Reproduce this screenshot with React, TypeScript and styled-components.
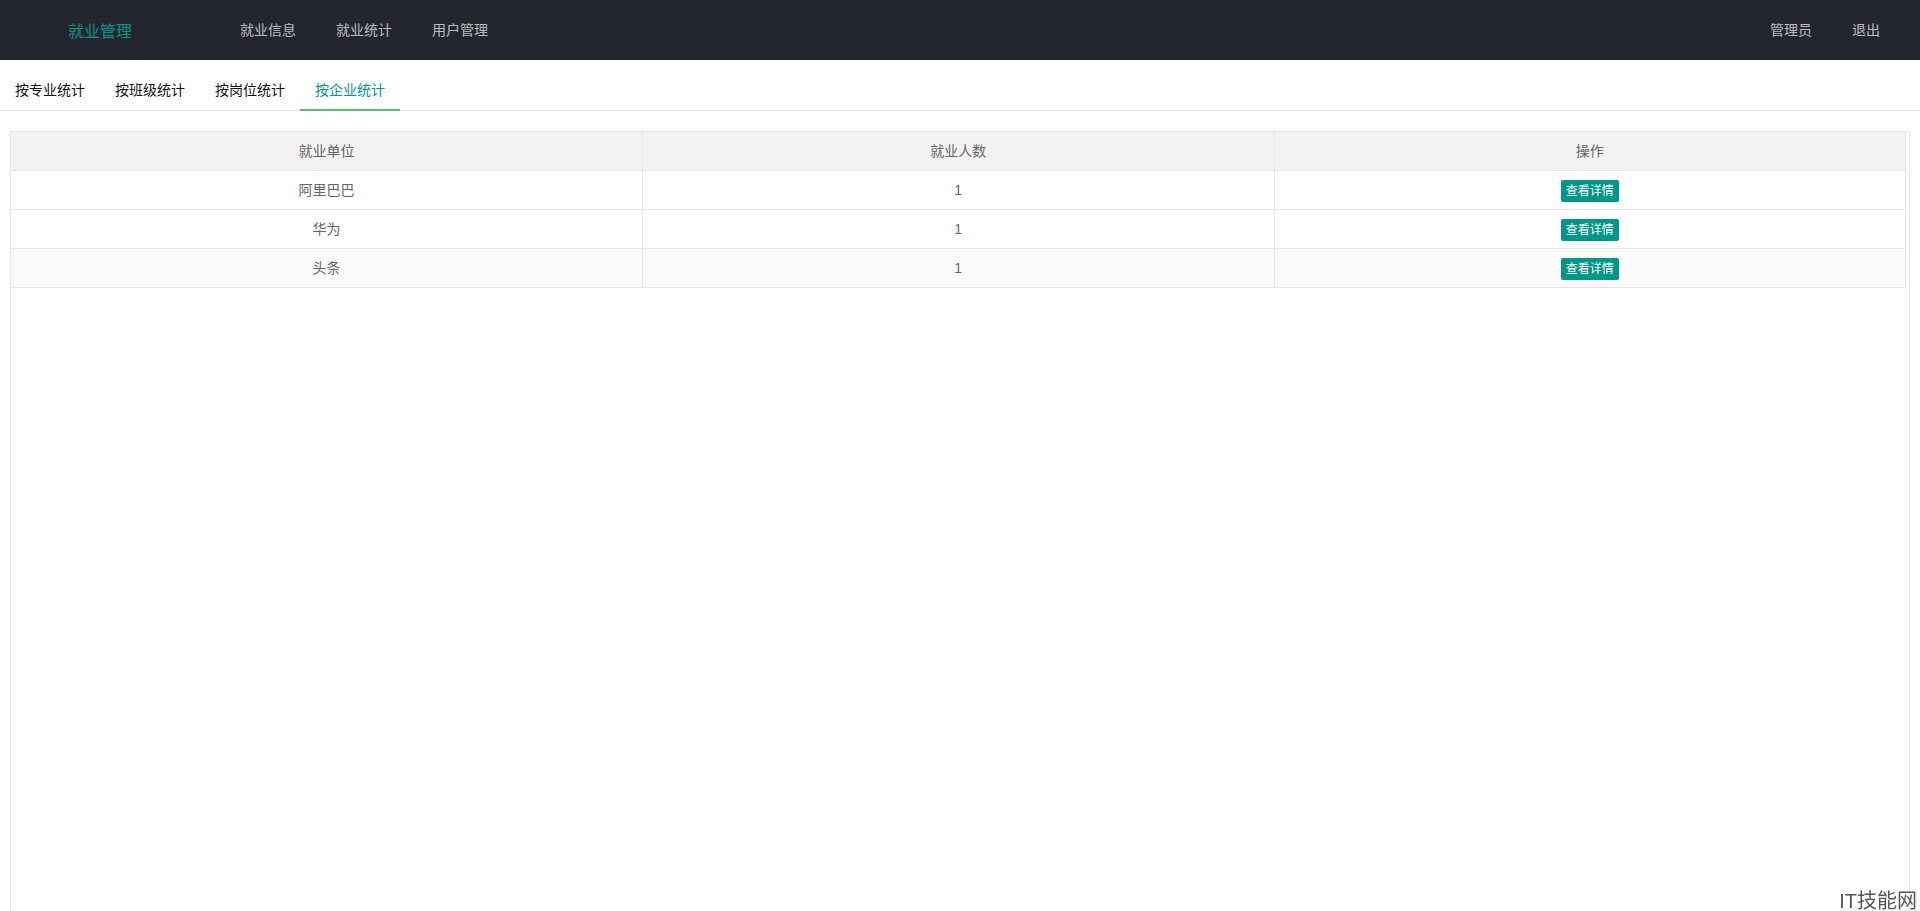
import React from 'react';
import styled, { createGlobalStyle } from 'styled-components';

const GlobalStyles = createGlobalStyle`
  * {
    margin: 0;
    padding: 0;
    box-sizing: border-box;
  }

  html, body {
    height: 100%;
    overflow: hidden;
  }

  body {
    background: #fff;
    color: #333;
    font-family: "Liberation Sans", "Noto Sans CJK SC", sans-serif;
    font-size: 14px;
  }
`;

const Header = styled.header`
  display: flex;
  align-items: center;
  height: 60px;
  background-color: #23262e;
`;

const Logo = styled.div`
  width: 200px;
  text-align: center;
  font-size: 16px;
  color: #009688;
`;

const Nav = styled.ul<{ $right?: boolean }>`
  display: flex;
  list-style: none;
  padding: 0 20px;
  margin-left: ${({ $right }) => ($right ? 'auto' : '0')};
`;

const NavLink = styled.li`
  padding: 0 20px;
  line-height: 60px;
  font-size: 14px;
  color: rgba(255, 255, 255, 0.7);
  cursor: pointer;
`;

const TabBar = styled.ul`
  display: flex;
  list-style: none;
  height: 41px;
  margin-top: 10px;
  border-bottom: 1px solid #e6e6e6;
`;

const Tab = styled.li<{ $active?: boolean }>`
  position: relative;
  min-width: 65px;
  padding: 0 15px;
  line-height: 40px;
  font-size: 14px;
  color: ${({ $active }) => ($active ? '#009688' : '#111')};
  cursor: pointer;

  &::after {
    content: '';
    display: ${({ $active }) => ($active ? 'block' : 'none')};
    position: absolute;
    left: 0;
    right: 0;
    bottom: -1px;
    height: 2px;
    background: #5fb878;
  }
`;

const TableBox = styled.div`
  margin: 20px 10px 0;
  min-height: 820px;
  border: 1px solid #e6e6e6;
`;

const Table = styled.table`
  width: calc(100% - 3px);
  table-layout: fixed;
  border-collapse: collapse;
  color: #666;
`;

const HeadCell = styled.th`
  height: 38px;
  padding: 5px 15px;
  line-height: 28px;
  font-weight: normal;
  font-size: 14px;
  text-align: center;
  background: #f2f2f2;
  border-right: 1px solid #e6e6e6;
  border-bottom: 1px solid #e6e6e6;
`;

const Row = styled.tr<{ $shaded?: boolean }>`
  background: ${({ $shaded }) => ($shaded ? '#fafafa' : '#fff')};
`;

const Cell = styled.td`
  height: 39px;
  padding: 5px 15px;
  line-height: 28px;
  font-size: 14px;
  text-align: center;
  border-right: 1px solid #e6e6e6;
  border-bottom: 1px solid #e6e6e6;
`;

const DetailButton = styled.button`
  display: inline-block;
  height: 22px;
  line-height: 22px;
  padding: 0 5px;
  border: none;
  border-radius: 2px;
  background: #009688;
  color: #fff;
  font-family: inherit;
  font-size: 12px;
  vertical-align: middle;
  cursor: pointer;
`;

const Watermark = styled.div`
  position: fixed;
  right: 3px;
  bottom: -3px;
  font-size: 20px;
  color: #555;
  pointer-events: none;
`;

const rows = [
  { company: '阿里巴巴', count: 1 },
  { company: '华为', count: 1 },
  { company: '头条', count: 1 },
];

const tabs = ['按专业统计', '按班级统计', '按岗位统计', '按企业统计'];

export default function App() {
  return (
    <>
      <GlobalStyles />
      <Header>
        <Logo>就业管理</Logo>
        <Nav>
          <NavLink>就业信息</NavLink>
          <NavLink>就业统计</NavLink>
          <NavLink>用户管理</NavLink>
        </Nav>
        <Nav $right>
          <NavLink>管理员</NavLink>
          <NavLink>退出</NavLink>
        </Nav>
      </Header>

      <TabBar>
        {tabs.map((t, i) => (
          <Tab key={t} $active={i === 3}>
            {t}
          </Tab>
        ))}
      </TabBar>

      <TableBox>
        <Table>
          <thead>
            <tr>
              <HeadCell>就业单位</HeadCell>
              <HeadCell>就业人数</HeadCell>
              <HeadCell>操作</HeadCell>
            </tr>
          </thead>
          <tbody>
            {rows.map((r, i) => (
              <Row key={r.company} $shaded={i === 2}>
                <Cell>{r.company}</Cell>
                <Cell>{r.count}</Cell>
                <Cell>
                  <DetailButton>查看详情</DetailButton>
                </Cell>
              </Row>
            ))}
          </tbody>
        </Table>
      </TableBox>

      <Watermark>IT技能网</Watermark>
    </>
  );
}
